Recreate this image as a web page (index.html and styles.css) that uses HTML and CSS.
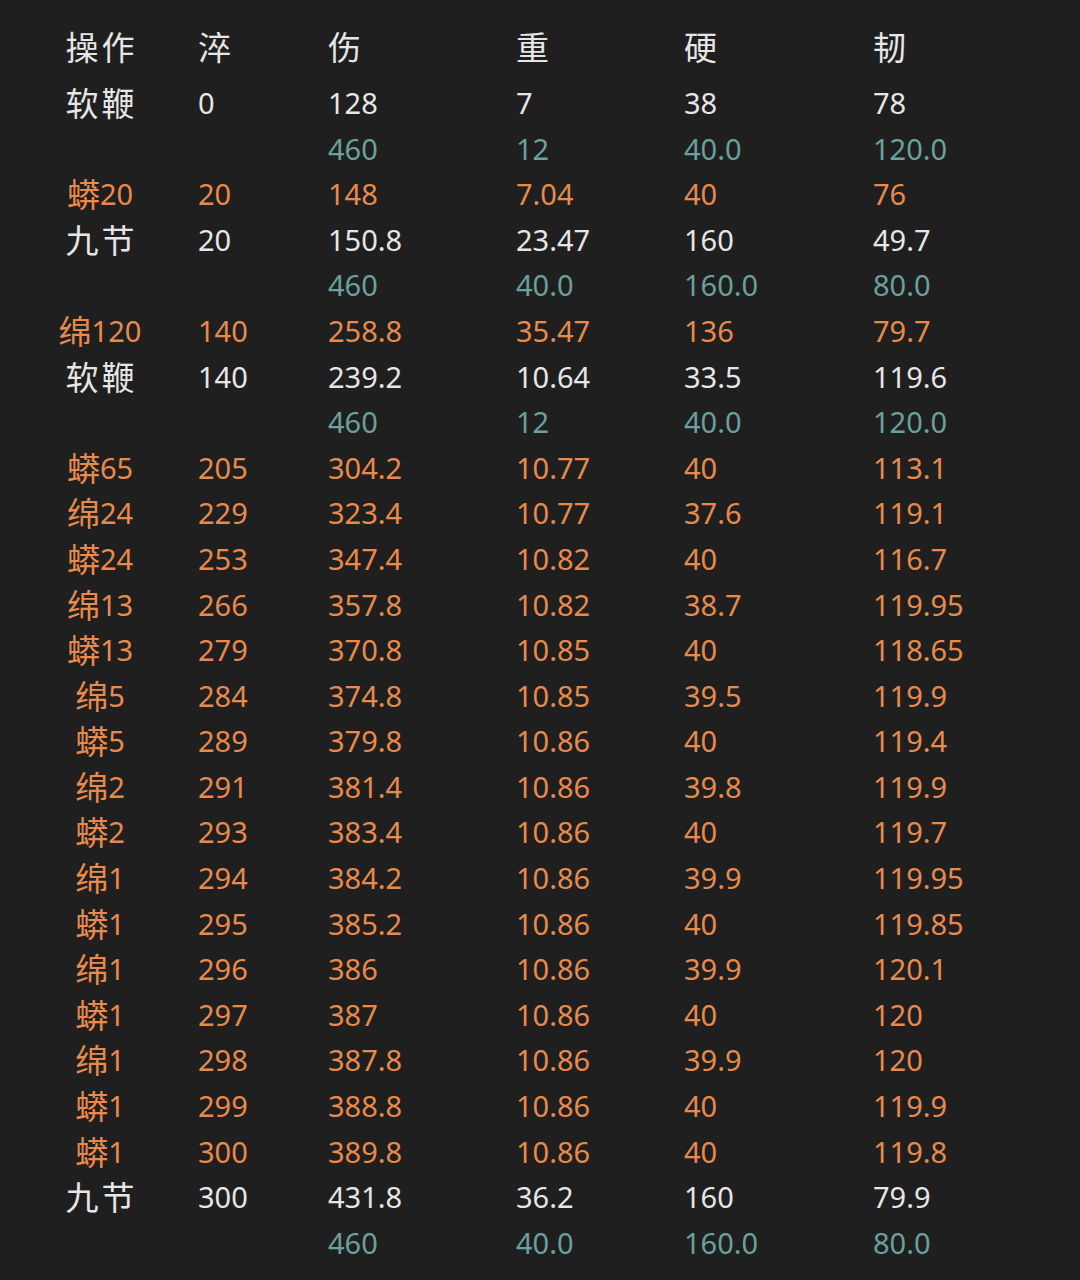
FILE: index.html
```html
<!DOCTYPE html>
<html lang="zh">
<head>
<meta charset="utf-8">
<title>表</title>
<link rel="stylesheet" href="styles.css">
</head>
<body>
<div class="sheet">
  <div class="row head w"><span class="c1"><i class="k k2">操作</i></span><span><i class="k">淬</i></span><span><i class="k">伤</i></span><span><i class="k">重</i></span><span><i class="k">硬</i></span><span><i class="k">韧</i></span></div>
  <div class="row w"><span class="c1"><i class="k k2">软鞭</i></span><span>0</span><span>128</span><span>7</span><span>38</span><span>78</span></div>
  <div class="row t"><span class="c1"></span><span></span><span>460</span><span>12</span><span>40.0</span><span>120.0</span></div>
  <div class="row o"><span class="c1"><i class="k">蟒</i>20</span><span>20</span><span>148</span><span>7.04</span><span>40</span><span>76</span></div>
  <div class="row w"><span class="c1"><i class="k k2">九节</i></span><span>20</span><span>150.8</span><span>23.47</span><span>160</span><span>49.7</span></div>
  <div class="row t"><span class="c1"></span><span></span><span>460</span><span>40.0</span><span>160.0</span><span>80.0</span></div>
  <div class="row o"><span class="c1"><i class="k">绵</i>120</span><span>140</span><span>258.8</span><span>35.47</span><span>136</span><span>79.7</span></div>
  <div class="row w"><span class="c1"><i class="k k2">软鞭</i></span><span>140</span><span>239.2</span><span>10.64</span><span>33.5</span><span>119.6</span></div>
  <div class="row t"><span class="c1"></span><span></span><span>460</span><span>12</span><span>40.0</span><span>120.0</span></div>
  <div class="row o"><span class="c1"><i class="k">蟒</i>65</span><span>205</span><span>304.2</span><span>10.77</span><span>40</span><span>113.1</span></div>
  <div class="row o"><span class="c1"><i class="k">绵</i>24</span><span>229</span><span>323.4</span><span>10.77</span><span>37.6</span><span>119.1</span></div>
  <div class="row o"><span class="c1"><i class="k">蟒</i>24</span><span>253</span><span>347.4</span><span>10.82</span><span>40</span><span>116.7</span></div>
  <div class="row o"><span class="c1"><i class="k">绵</i>13</span><span>266</span><span>357.8</span><span>10.82</span><span>38.7</span><span>119.95</span></div>
  <div class="row o"><span class="c1"><i class="k">蟒</i>13</span><span>279</span><span>370.8</span><span>10.85</span><span>40</span><span>118.65</span></div>
  <div class="row o"><span class="c1"><i class="k">绵</i>5</span><span>284</span><span>374.8</span><span>10.85</span><span>39.5</span><span>119.9</span></div>
  <div class="row o"><span class="c1"><i class="k">蟒</i>5</span><span>289</span><span>379.8</span><span>10.86</span><span>40</span><span>119.4</span></div>
  <div class="row o"><span class="c1"><i class="k">绵</i>2</span><span>291</span><span>381.4</span><span>10.86</span><span>39.8</span><span>119.9</span></div>
  <div class="row o"><span class="c1"><i class="k">蟒</i>2</span><span>293</span><span>383.4</span><span>10.86</span><span>40</span><span>119.7</span></div>
  <div class="row o"><span class="c1"><i class="k">绵</i>1</span><span>294</span><span>384.2</span><span>10.86</span><span>39.9</span><span>119.95</span></div>
  <div class="row o"><span class="c1"><i class="k">蟒</i>1</span><span>295</span><span>385.2</span><span>10.86</span><span>40</span><span>119.85</span></div>
  <div class="row o"><span class="c1"><i class="k">绵</i>1</span><span>296</span><span>386</span><span>10.86</span><span>39.9</span><span>120.1</span></div>
  <div class="row o"><span class="c1"><i class="k">蟒</i>1</span><span>297</span><span>387</span><span>10.86</span><span>40</span><span>120</span></div>
  <div class="row o"><span class="c1"><i class="k">绵</i>1</span><span>298</span><span>387.8</span><span>10.86</span><span>39.9</span><span>120</span></div>
  <div class="row o"><span class="c1"><i class="k">蟒</i>1</span><span>299</span><span>388.8</span><span>10.86</span><span>40</span><span>119.9</span></div>
  <div class="row o"><span class="c1"><i class="k">蟒</i>1</span><span>300</span><span>389.8</span><span>10.86</span><span>40</span><span>119.8</span></div>
  <div class="row w"><span class="c1"><i class="k k2">九节</i></span><span>300</span><span>431.8</span><span>36.2</span><span>160</span><span>79.9</span></div>
  <div class="row t"><span class="c1"></span><span></span><span>460</span><span>40.0</span><span>160.0</span><span>80.0</span></div>
</div>
</body>
</html>
```
FILE: styles.css
```css
html, body {
  margin: 0;
  padding: 0;
  background: #1f1f1f;
}
body {
  width: 1080px;
  height: 1280px;
  overflow: hidden;
  font-family: "Noto Sans", "Noto Sans CJK SC", sans-serif;
  font-size: 29px;
}
.sheet {
  display: flex;
  flex-direction: column;
  padding: 24px 0 0 40px;
}
.row {
  display: grid;
  grid-template-columns: 158px 130px 188px 168px 189px 1fr;
  height: 45.6px;
  line-height: 45.6px;
  white-space: nowrap;
}
.row.head {
  margin-bottom: 10.4px;
}
.c1 {
  padding-right: 38px;
  text-align: center;
}
.k {
  font-style: normal;
  font-family: "Noto Sans CJK SC", sans-serif;
  font-size: 33px;
  vertical-align: top;
}
.k2 {
  letter-spacing: 3px;
  margin-right: -3px;
}
.w { color: #e6e6e6; }
.o { color: #e88a4c; }
.t { color: #69a19c; }
```
